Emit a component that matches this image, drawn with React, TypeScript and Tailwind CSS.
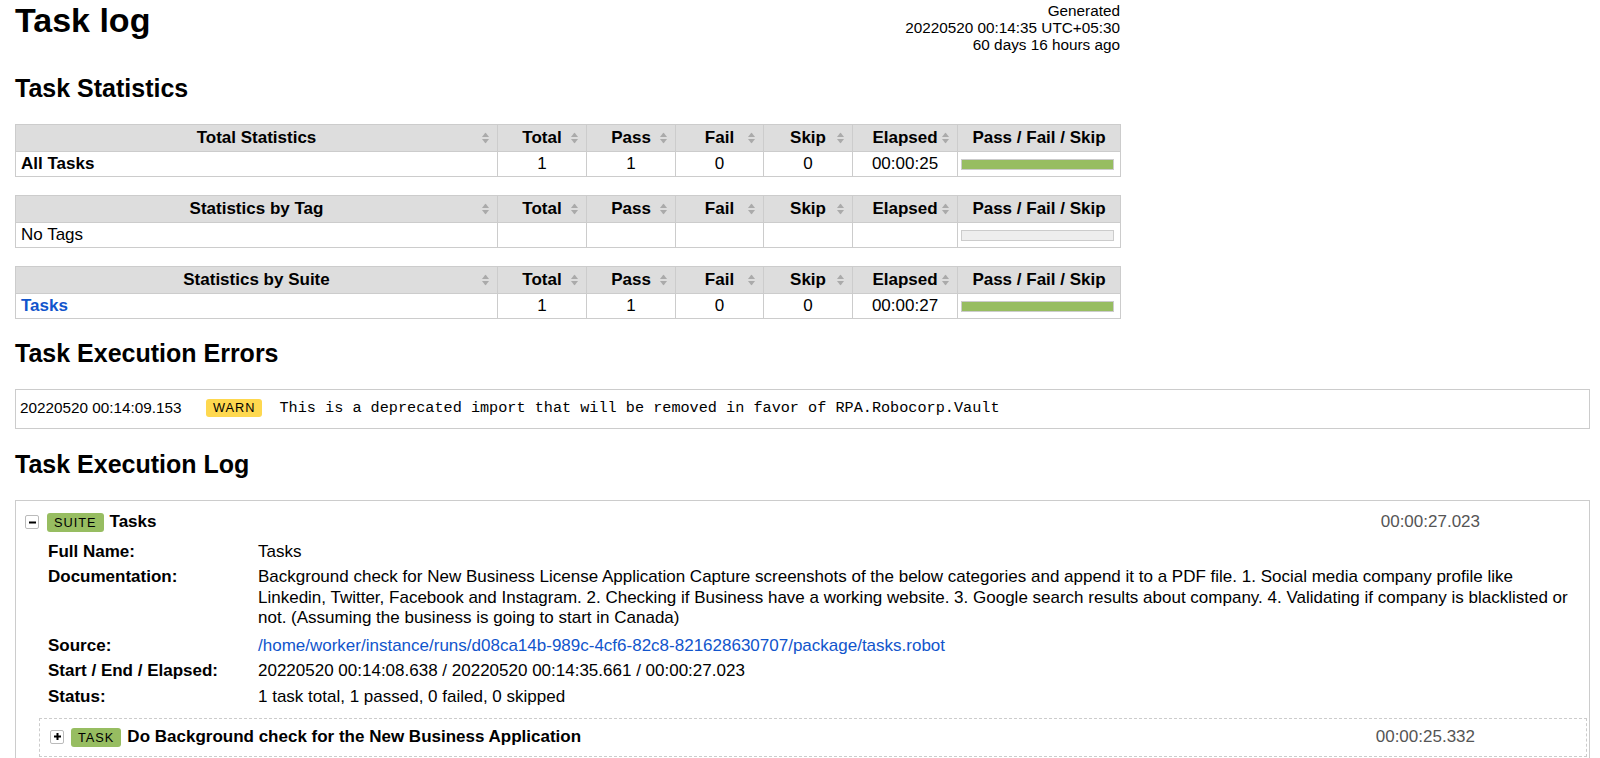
import React from "react";

type StatRow = {
  name: string;
  link?: boolean;
  bold?: boolean;
  total?: string;
  pass?: string;
  fail?: string;
  skip?: string;
  elapsed?: string;
  passed?: boolean;
};

const columns = ["Total", "Pass", "Fail", "Skip", "Elapsed"];

function SortIcon() {
  return (
    <svg
      width="7"
      height="11"
      viewBox="0 0 7 11"
      className="absolute top-1/2 right-[8px] -translate-y-1/2"
    >
      <path d="M0 4.5 L3.5 0 L7 4.5 Z" fill="#aaa" />
      <path d="M0 6.5 L3.5 11 L7 6.5 Z" fill="#aaa" />
    </svg>
  );
}

function StatsTable({ title, row }: { title: string; row: StatRow }) {
  return (
    <table className="w-[1105px] table-fixed border-collapse border border-[#ccc] text-[17px]">
      <colgroup>
        <col className="w-[482px]" />
        <col className="w-[89px]" />
        <col className="w-[89px]" />
        <col className="w-[88px]" />
        <col className="w-[89px]" />
        <col className="w-[105px]" />
        <col className="w-[163px]" />
      </colgroup>
      <thead>
        <tr className="bg-[#ddd]">
          <th className="relative h-[27px] border border-[#ccc] p-0 leading-[20px] font-bold">
            {title}
            <SortIcon />
          </th>
          {columns.map((c) => (
            <th
              key={c}
              className="relative h-[27px] border border-[#ccc] p-0 leading-[20px] font-bold"
            >
              {c}
              <SortIcon />
            </th>
          ))}
          <th className="h-[27px] border border-[#ccc] p-0 leading-[20px] font-bold">
            Pass / Fail / Skip
          </th>
        </tr>
      </thead>
      <tbody>
        <tr>
          <td
            className={`h-[25px] border border-[#ccc] py-0 pl-[5px] leading-[20px] ${
              row.bold ? "font-bold" : ""
            } ${row.link ? "text-[#15c]" : ""}`}
          >
            {row.name}
          </td>
          <td className="border border-[#ccc] p-0 text-center leading-[20px]">{row.total}</td>
          <td className="border border-[#ccc] p-0 text-center leading-[20px]">{row.pass}</td>
          <td className="border border-[#ccc] p-0 text-center leading-[20px]">{row.fail}</td>
          <td className="border border-[#ccc] p-0 text-center leading-[20px]">{row.skip}</td>
          <td className="border border-[#ccc] p-0 text-center leading-[20px]">{row.elapsed}</td>
          <td className="border border-[#ccc] py-0 pl-[3px]">
            <div className="h-[11px] w-[153px] border border-[#ccc] bg-[#eee]">
              {row.passed && <div className="h-full w-full bg-[#97bd61]" />}
            </div>
          </td>
        </tr>
      </tbody>
    </table>
  );
}

function Toggle({ open }: { open?: boolean }) {
  return (
    <span className="flex h-[14px] w-[14px] items-center justify-center rounded-[2px] border border-[#bbb] bg-white">
      <svg width="7" height="7" viewBox="0 0 7 7">
        <rect x="0" y="2.5" width="7" height="2" fill="#000" />
        {!open && <rect x="2.5" y="0" width="2" height="7" fill="#000" />}
      </svg>
    </span>
  );
}

function Label({ children, color }: { children: React.ReactNode; color: string }) {
  return (
    <span
      className={`rounded-[3px] px-[7px] py-[2px] text-[12.75px] leading-[14px] tracking-[1px] text-black ${color}`}
    >
      {children}
    </span>
  );
}

function Meta({ label, children }: { label: string; children: React.ReactNode }) {
  return (
    <div className="grid grid-cols-[210px_1fr] py-[2.5px] leading-[20.5px]">
      <div className="font-bold">{label}</div>
      <div className="pr-[6px]">{children}</div>
    </div>
  );
}

export default function App() {
  return (
    <div
      className="min-h-screen bg-white px-[15px] text-[17px] text-black"
      style={{ fontFamily: '"Liberation Sans", Arial, Helvetica, sans-serif' }}
    >
      <div className="flex w-[1105px] items-start justify-between">
        <h1 className="text-[34px] leading-[40px] font-bold">Task log</h1>
        <div className="mt-[2px] text-right text-[15.3px] leading-[17px]">
          Generated
          <br />
          20220520 00:14:35 UTC+05:30
          <br />
          60 days 16 hours ago
        </div>
      </div>

      <h2 className="mt-[20px] mb-[21px] text-[25px] leading-[30px] font-bold">Task Statistics</h2>
      <div className="flex flex-col gap-[18px]">
        <StatsTable
          title="Total Statistics"
          row={{
            name: "All Tasks",
            bold: true,
            total: "1",
            pass: "1",
            fail: "0",
            skip: "0",
            elapsed: "00:00:25",
            passed: true,
          }}
        />
        <StatsTable title="Statistics by Tag" row={{ name: "No Tags" }} />
        <StatsTable
          title="Statistics by Suite"
          row={{
            name: "Tasks",
            bold: true,
            link: true,
            total: "1",
            pass: "1",
            fail: "0",
            skip: "0",
            elapsed: "00:00:27",
            passed: true,
          }}
        />
      </div>

      <h2 className="mt-[19px] mb-[21px] text-[25px] leading-[30px] font-bold">
        Task Execution Errors
      </h2>
      <div className="flex h-[40px] w-[1575px] items-center border border-[#ccc] pb-[3px] pl-[4px]">
        <span className="w-[186px] text-[15.3px] leading-[18px]">20220520 00:14:09.153</span>
        <span className="rounded-[3px] bg-[#fed84f] px-[7px] py-[2px] text-[12.75px] leading-[14px] tracking-[1px] text-black">
          WARN
        </span>
        <span className="ml-[17px] font-['Liberation_Mono',monospace] text-[15.2px] leading-[18px]">
          This is a deprecated import that will be removed in favor of RPA.Robocorp.Vault
        </span>
      </div>

      <h2 className="mt-[20px] mb-[21px] text-[25px] leading-[30px] font-bold">
        Task Execution Log
      </h2>
      <section className="w-[1575px] border border-[#ccc] pb-[12px]">
        <div className="mt-[10px] flex h-[22px] items-center pr-[109px] pl-[9px]">
          <Toggle open />
          <span className="ml-[8px]">
            <Label color="bg-[#97bd61]">SUITE</Label>
          </span>
          <span className="ml-[6px] font-bold">Tasks</span>
          <span className="ml-auto text-[#555]">00:00:27.023</span>
        </div>
        <div className="mt-[6px] pl-[32px]">
          <Meta label="Full Name:">Tasks</Meta>
          <Meta label="Documentation:">
            <p className="pb-[2px]">
              Background check for New Business License Application Capture screenshots of the
              below categories and append it to a PDF file. 1. Social media company profile like
              Linkedin, Twitter, Facebook and Instagram. 2. Checking if Business have a working
              website. 3. Google search results about company. 4. Validating if company is
              blacklisted or not. (Assuming the business is going to start in Canada)
            </p>
          </Meta>
          <Meta label="Source:">
            <a className="text-[#15c]">
              /home/worker/instance/runs/d08ca14b-989c-4cf6-82c8-821628630707/package/tasks.robot
            </a>
          </Meta>
          <Meta label="Start / End / Elapsed:">
            20220520 00:14:08.638 / 20220520 00:14:35.661 / 00:00:27.023
          </Meta>
          <Meta label="Status:">1 task total, 1 passed, 0 failed, 0 skipped</Meta>
        </div>
        <div className="mt-[8px] mr-[2px] ml-[23px] border border-dashed border-[#ccc] pt-[7px] pb-[8px]">
          <div className="flex h-[22px] items-center pr-[111px] pl-[10px]">
            <Toggle />
            <span className="ml-[7px]">
              <Label color="bg-[#97bd61]">TASK</Label>
            </span>
            <span className="ml-[6px] font-bold">Do Background check for the New Business Application</span>
            <span className="ml-auto text-[#555]">00:00:25.332</span>
          </div>
        </div>
      </section>
    </div>
  );
}
